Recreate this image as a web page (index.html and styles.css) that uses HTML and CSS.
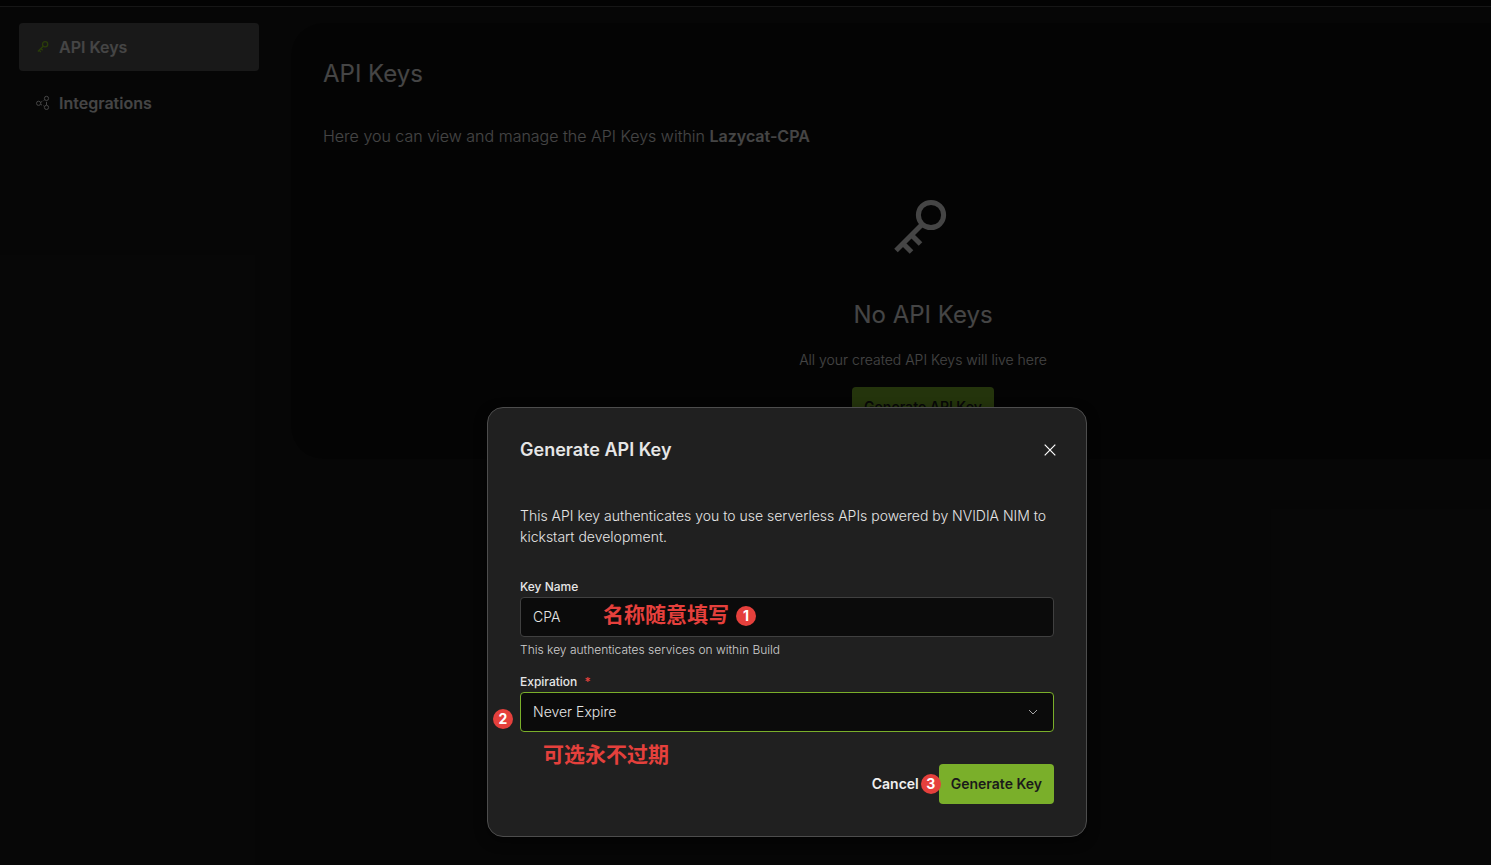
FILE: index.html
```html
<!DOCTYPE html>
<html lang="en">
  <head>
    <meta charset="UTF-8" />
    <meta name="viewport" content="width=device-width, initial-scale=1.0" />
    <title>API Keys</title>
    <link rel="stylesheet" href="styles.css">
  </head>
  <body>
    <div class="app">
      <header class="topbar"></header>

      <div class="layout">
        <nav class="sidebar">
          <a class="nav-item active" href="#">
            <svg class="nav-icon key" viewBox="0 0 16 16">
              <circle cx="10.1" cy="5.3" r="2.6" />
              <path d="M8.2 7.2L2.9 12.5M4.1 11.3l1.7 1.7M5.9 9.5l1.7 1.7" />
            </svg>
            API Keys
          </a>
          <a class="nav-item" href="#">
            <svg class="nav-icon" viewBox="0 0 16 16">
              <circle cx="3.6" cy="8.3" r="2.1" />
              <circle cx="11.5" cy="3.4" r="2.1" />
              <circle cx="11.5" cy="12.4" r="2.1" />
              <path d="M5.9 7.3l1.4-1M8.6 5.5l1.2-.8M5.6 9.3l1.4.8M8.4 10.7l1 .6M11.5 6.8v3.2" />
            </svg>
            Integrations
          </a>
        </nav>

        <main class="panel">
          <h1>API Keys</h1>
          <p class="intro">Here you can view and manage the API Keys within <b>Lazycat-CPA</b></p>

          <div class="empty">
            <svg class="empty-icon" viewBox="0 0 64 64">
              <circle cx="40" cy="20" r="12.6" />
              <path d="M31 29.5L5 55.5M12 48.5l8.5 8.5M20.5 40l9 9" />
            </svg>
            <h2>No API Keys</h2>
            <p>All your created API Keys will live here</p>
            <button class="btn btn-primary">Generate API Key</button>
          </div>
        </main>
      </div>

      <div class="overlay">
        <form class="modal" role="dialog" aria-labelledby="modalTitle">
          <div class="modal-header">
            <h2 id="modalTitle">Generate API Key</h2>
            <button type="button" class="close" aria-label="Close">
              <svg viewBox="0 0 16 16"><path d="M2.7 2.7l10.6 10.6M13.3 2.7L2.7 13.3" /></svg>
            </button>
          </div>

          <p class="description">
            This API key authenticates you to use serverless APIs powered by NVIDIA NIM to kickstart development.
          </p>

          <div class="field">
            <label for="keyName">Key Name</label>
            <div class="control">
              <input type="text" id="keyName" value="CPA" />
              <div class="note note-name" lang="zh">名称随意填写</div>
              <span class="badge badge-name">1</span>
            </div>
            <p class="hint">This key authenticates services on within Build</p>
          </div>

          <div class="field">
            <label for="expiration">Expiration <span class="required">*</span></label>
            <div class="control">
              <select id="expiration" class="focused">
                <option>Never Expire</option>
              </select>
              <svg class="chevron" viewBox="0 0 16 16"><path d="M4 6l4 4 4-4" /></svg>
              <span class="badge badge-expire">2</span>
              <div class="note note-expire" lang="zh">可选永不过期</div>
            </div>
          </div>

          <div class="actions">
            <button type="button" class="btn btn-text">Cancel</button>
            <button type="submit" class="btn btn-primary">Generate Key<span class="badge badge-submit">3</span></button>
          </div>
        </form>
      </div>
    </div>
  </body>
</html>
```
FILE: styles.css
```css
* {
  box-sizing: border-box;
}

body {
  margin: 0;
  background-color: #080808;
  color: #e6e6e6;
  font-family: Inter, "Noto Sans CJK SC", sans-serif;
  font-size: 14px;
}

h1,
h2,
p {
  margin: 0;
}

button,
input,
select {
  font: inherit;
}

.app {
  position: relative;
  min-height: 100vh;
  background-color: #171717;
}

.topbar {
  height: 7px;
  background-color: #0d0d0d;
  border-bottom: 1px solid #4a4a4a;
}

.layout {
  display: flex;
  align-items: flex-start;
  gap: 32px;
  padding: 16px 0 16px 19px;
}

.sidebar {
  display: flex;
  flex-direction: column;
  flex: 0 0 240px;
  gap: 8px;
}

.nav-item {
  display: flex;
  align-items: center;
  gap: 8px;
  height: 48px;
  padding: 0 16px;
  border-radius: 4px;
  color: #e6e6e6;
  font-size: 16px;
  font-weight: 600;
  text-decoration: none;
}

.nav-item.active {
  background-color: #545454;
}

.nav-icon {
  width: 16px;
  height: 16px;
  fill: none;
  stroke: #e6e6e6;
  stroke-width: 1;
}

.nav-icon.key {
  stroke: #8ccc1e;
  stroke-width: 1.3;
}

.panel {
  flex: 1;
  padding: 32px 0 32px 32px;
  border-radius: 32px 0 0 32px;
  background-color: #101010;
}

.panel h1,
.panel h2 {
  font-size: 24px;
  font-weight: 400;
  line-height: 38px;
}

.intro {
  margin-top: 32px;
  font-size: 16px;
  font-weight: 300;
  line-height: 22px;
}

.intro b {
  font-weight: 600;
}

.empty {
  display: flex;
  flex-direction: column;
  align-items: center;
  margin-top: 48px;
  padding-left: 32px;
}

.empty-icon {
  width: 64px;
  height: 64px;
  margin-bottom: 37px;
  fill: none;
  stroke: #e6e6e6;
  stroke-width: 5;
}

.empty p {
  margin: 15px 0 16px;
  font-weight: 300;
  line-height: 22px;
}

.btn {
  position: relative;
  height: 40px;
  padding: 0 12px 2px;
  border: none;
  border-radius: 4px;
  font-weight: 600;
  cursor: pointer;
}

.btn-primary {
  background-color: #7aaf2a;
  color: #1a1a1a;
}

.btn-text {
  background: none;
  color: #f0f0f0;
}

.overlay {
  position: absolute;
  inset: 0;
  display: flex;
  align-items: flex-end;
  justify-content: center;
  padding: 0 0 28px 83px;
  background-color: rgba(0, 0, 0, 0.7);
}

.modal {
  width: 600px;
  padding: 32px;
  border: 1px solid #4d4d4d;
  border-radius: 16px;
  background-color: #202020;
  box-shadow: 0 4px 12px rgba(0, 0, 0, 0.5);
}

.modal-header {
  display: flex;
  align-items: center;
  justify-content: space-between;
  height: 20px;
}

.modal-header h2 {
  font-size: 18px;
  font-weight: 600;
  line-height: 20px;
}

.close {
  width: 24px;
  height: 24px;
  margin-right: -8px;
  padding: 4px;
  border: none;
  background: none;
  cursor: pointer;
}

.close svg {
  display: block;
  width: 16px;
  height: 16px;
  fill: none;
  stroke: #ffffff;
  stroke-width: 1.2;
}

.description {
  margin: 45px 0 32px;
  font-weight: 300;
  line-height: 21px;
}

.field + .field {
  margin-top: 16px;
}

.field label {
  display: block;
  margin-bottom: 2px;
  font-size: 12px;
  font-weight: 500;
  line-height: 16px;
}

.required {
  margin-left: 4px;
  color: #e5403c;
}

.control {
  position: relative;
}

.control input,
.control select {
  display: block;
  width: 100%;
  height: 40px;
  padding: 0 12px 2px;
  border: 1px solid #404040;
  border-radius: 4px;
  outline: none;
  background-color: #0b0b0b;
  color: #e6e6e6;
  font-weight: 300;
  appearance: none;
}

.control select.focused {
  border-color: #7aaf2a;
}

.chevron {
  position: absolute;
  top: 12px;
  right: 13px;
  width: 16px;
  height: 16px;
  fill: none;
  stroke: #a6a6a6;
  stroke-width: 1;
  pointer-events: none;
}

.hint {
  margin-top: 5px;
  color: #d0d0d0;
  font-size: 12px;
  font-weight: 300;
  line-height: 16px;
}

.actions {
  display: flex;
  justify-content: flex-end;
  gap: 8px;
  margin-top: 32px;
}

/* numbered notes drawn over the form */
.note {
  position: absolute;
  color: #e5403c;
  font-family: "Noto Sans CJK SC", sans-serif;
  font-size: 21px;
  font-weight: 700;
  line-height: 30px;
  white-space: nowrap;
}

.note-name {
  top: 1px;
  left: 83px;
}

.note-expire {
  top: 46px;
  left: 23px;
}

.badge {
  position: absolute;
  width: 20px;
  height: 20px;
  border-radius: 50%;
  background-color: #e5403c;
  color: #ffffff;
  font-size: 14px;
  font-weight: 700;
  line-height: 20px;
  text-align: center;
}

.badge-name {
  top: 9px;
  left: 216px;
}

.badge-expire {
  top: 17px;
  left: -27px;
}

.badge-submit {
  top: 10px;
  left: -18px;
}
```
